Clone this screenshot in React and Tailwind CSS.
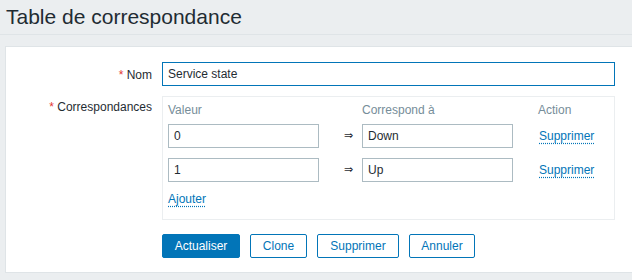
export default function App() {
  const rows = [
    { value: '0', newValue: 'Down' },
    { value: '1', newValue: 'Up' },
  ];

  return (
    <div className="min-h-[280px] w-full overflow-hidden bg-[#ebeef0] text-[12px] text-[#1f2c33] font-['Liberation_Sans',Arial,sans-serif]">
      {/* Header */}
      <div className="border-b border-[#dfe4e7] pl-[6px] pt-[4px] pb-[5px]">
        <h1 className="text-[21px] leading-[25px] font-normal">Table de correspondance</h1>
      </div>

      {/* Form panel */}
      <div className="mt-[11px] ml-[5px] -mr-[5px] bg-white border border-[#dfe4e7] pt-[15px] pb-[14px]">
        <div className="grid grid-cols-[146px_453px] gap-x-[10px] gap-y-[10px]">
          <label className="text-right pt-[6px] leading-[14px]">
            <span className="text-[#e33734]">*</span> Nom
          </label>
          <div className="h-[24px] border border-[#0275b8] px-[5px] flex items-center">
            <span className="leading-[14px]">Service state</span>
          </div>

          <label className="text-right pt-[4px] leading-[14px]">
            <span className="text-[#e33734]">*</span> Correspondances
          </label>
          <div className="border border-[#ebeef0] pl-[5px] pt-[6px] pb-[13px]">
            <div className="flex leading-[14px] text-[#768d99]">
              <span className="w-[194px]">Valeur</span>
              <span className="w-[176px]">Correspond à</span>
              <span>Action</span>
            </div>
            {rows.map((row, i) => (
              <div key={i} className={`flex items-center ${i === 0 ? 'mt-[7px]' : 'mt-[10px]'}`}>
                <div className="w-[151px] h-[24px] border border-[#acbbc2] px-[5px] flex items-center">{row.value}</div>
                <span className="ml-[25px] w-[18px] leading-[14px] font-['DejaVu_Sans',sans-serif] text-[11px]">⇒</span>
                <div className="w-[151px] h-[24px] border border-[#acbbc2] px-[5px] flex items-center">{row.newValue}</div>
                <a className="ml-[26px] leading-[14px] text-[#0275b8] underline decoration-dotted underline-offset-[3px] cursor-pointer">Supprimer</a>
              </div>
            ))}
            <div className="mt-[10px] leading-[14px]">
              <a className="text-[#0275b8] underline decoration-dotted underline-offset-[3px] cursor-pointer">Ajouter</a>
            </div>
          </div>
        </div>

        {/* Buttons */}
        <div className="mt-[14px] ml-[156px] flex gap-[10px]">
          <button className="w-[78px] h-[24px] rounded-[2px] bg-[#0275b8] border border-[#0275b8] text-white">Actualiser</button>
          <button className="w-[57px] h-[24px] rounded-[2px] bg-white border border-[#0275b8] text-[#0275b8]">Clone</button>
          <button className="w-[82px] h-[24px] rounded-[2px] bg-white border border-[#0275b8] text-[#0275b8]">Supprimer</button>
          <button className="w-[66px] h-[24px] rounded-[2px] bg-white border border-[#0275b8] text-[#0275b8]">Annuler</button>
        </div>
      </div>
    </div>
  );
}
